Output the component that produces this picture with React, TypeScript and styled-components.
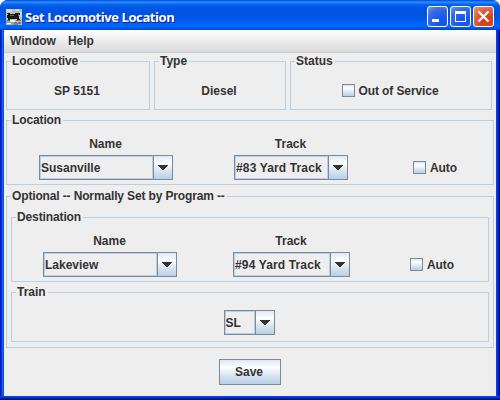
import React from 'react';
import styled, { createGlobalStyle, css } from 'styled-components';

const INK = '#333333';
const FACE = '#eeeeee';
const LINE = '#b8cfe5';
const EDGE = '#7a8a99';
const metal = 'linear-gradient(180deg, #dde8f3 0%, #ffffff 30%, #dde8f3 60%, #b8cfe5 100%)';

const GlobalStyle = createGlobalStyle`
  * { box-sizing: border-box; }
  body { margin: 0; background: #fff; overflow: hidden; }
`;

const Frame = styled.div`
  width: 500px;
  height: 400px;
  display: flex;
  flex-direction: column;
  border-radius: 8px 8px 0 0;
  overflow: hidden;
  background: linear-gradient(90deg, #0019cf 0 1px, #0831d9 1px 2px, #1660e8 2px 3px, #0855dd 3px 250px, #0540e8 250px 497px, #0030dc 497px 498px, #001ea0 498px 499px, #00138c 499px);
  font: bold 12px/16px 'Liberation Sans', Arial, sans-serif;
  color: ${INK};
`;

const TitleBar = styled.header`
  height: 30px;
  flex: none;
  display: flex;
  align-items: center;
  padding: 3px 6px 0;
  background: linear-gradient(180deg, #0058e0 0, #0a5ce8 1px, #3a93ff 2px, #1a7afa 3px, #0062ee 5px, #0055e2 8px, #0053e1 14px, #005af0 20px, #0066ff 25px, #0062f8 27px, #0050dc 29px, #0040c0 30px);
`;

const Title = styled.h1`
  flex: 1;
  margin: 0 0 0 3px;
  font: bold 13px/18px 'Open Sans', 'Noto Sans', sans-serif;
  letter-spacing: -0.42px;
  color: #fff;
  text-shadow: 1px 1px 0 #0a1883;
  white-space: nowrap;
`;

const Controls = styled.div`
  display: flex;
  gap: 2px;
`;

const ControlButton = styled.button<{ $close?: boolean }>`
  width: 21px;
  height: 21px;
  padding: 0;
  border: 1px solid #fff;
  border-radius: 3px;
  background: ${p => p.$close
    ? 'radial-gradient(circle at 75% 85%, #d8431b 0 30%, #e36343 65%, #ef9a80 100%)'
    : 'radial-gradient(circle at 75% 85%, #1557ee 0 25%, #3469e5 65%, #7697eb 100%)'};
  svg { display: block; }
`;

const Client = styled.main`
  flex: 1;
  margin: 0 4px 4px;
  background: ${FACE};
  display: flex;
  flex-direction: column;
`;

const BottomEdge = styled.div`
  height: 4px;
  flex: none;
  margin-top: -4px;
  background: linear-gradient(180deg, #0543e8 0 1px, #0036dc 1px 2px, #001ea0 2px 3px, #00138c 3px);
`;

const MenuBar = styled.nav`
  height: 23px;
  flex: none;
  display: flex;
  gap: 12px;
  padding: 3px 6px 0;
  background: linear-gradient(180deg, #ffffff, #dadada);
  border-bottom: 1px solid #cccccc;
`;

const Text = styled.span<{ $spacing?: number }>`
  white-space: nowrap;
  letter-spacing: ${p => p.$spacing ?? 0}px;
`;

const Content = styled.div`
  display: flex;
  flex-direction: column;
  padding: 8px 2px 0;
`;

const PanelRow = styled.div`
  display: flex;
  gap: 4px;
`;

const PanelBox = styled.section<{ $w: number; $h: number; $top?: number; $center?: boolean }>`
  position: relative;
  width: ${p => p.$w}px;
  height: ${p => p.$h}px;
  margin-top: ${p => p.$top ?? 0}px;
  border: 1px solid ${LINE};
  ${p => p.$center && css`
    display: flex;
    justify-content: center;
    align-items: center;
    padding: 10px 2px 0 0;
  `}
`;

const PanelTitle = styled.h2`
  position: absolute;
  left: 4px;
  top: -9px;
  margin: 0;
  padding: 0 2px 0 1px;
  font: inherit;
  background: ${FACE};
`;

const Columns = styled.div<{ $cols: string }>`
  display: grid;
  grid-template-columns: ${p => p.$cols};
  padding-top: 15px;
`;

const Field = styled.div`
  display: flex;
  flex-direction: column;
  align-items: center;
  gap: 3px;
`;

const FieldLabel = styled.span`
  padding-right: 1px;
`;

const CheckCell = styled.div<{ $left: number }>`
  padding: 24px 0 0 ${p => p.$left}px;
`;

const CheckLabel = styled.label`
  display: flex;
  align-items: center;
  gap: 4px;
`;

const CheckBox = styled.span`
  width: 13px;
  height: 13px;
  margin-bottom: 1px;
  border: 1px solid ${EDGE};
  background: ${metal};
`;

const ComboBox = styled.div<{ $w: number }>`
  width: ${p => p.$w}px;
  height: 25px;
  display: flex;
  border: 1px solid ${EDGE};
`;

const ComboValue = styled.div`
  flex: 1;
  min-width: 0;
  border: 1px solid ${LINE};
  padding: 3px 0 0;
`;

const ComboArrow = styled.div`
  width: 19px;
  border-left: 1px solid ${EDGE};
  background: ${metal};
  display: flex;
  align-items: center;
  justify-content: center;
`;

const Nested = styled.div`
  padding: 20px 4px 0;
`;

const SaveButton = styled.button`
  align-self: center;
  width: 62px;
  height: 26px;
  margin: 11px 0 0;
  padding: 0 2px 0 0;
  border: 1px solid ${EDGE};
  background: ${metal};
  font: inherit;
  color: ${INK};
`;

function TrainIcon() {
  return (
    <svg width="16" height="16" viewBox="0 0 16 16" shapeRendering="crispEdges">
      <path fill="#b9bdba" d="M0 0h16v16H0z" />
      <path fill="#d3d8d7" d="M0 0h6v3H0zM9 0h4v2H9zM14 3h2v5h-2z" />
      <path fill="#151719" d="M1 4h3v1h5V4h5v2h-1v4h1v1h-3v-1H4v1H2V9H1V6h1V5H1z" />
      <path fill="#63696c" d="M4 6h4v1H4zM12 5h1v2h-1zM1 11h4v1H1z" />
      <path fill="#8fa9a1" d="M0 12h5v2H0zM5 13h3v3H5z" />
      <path fill="#e7f2ef" d="M4 11h5v2H4zM1 14h4v1H1z" />
      <path fill="#b9605c" d="M10 11h3v1h-3zM8 13h3v1H8zM12 13h3v2h-3z" />
      <path fill="#7d8285" d="M8 14h4v2H8zM13 11h2v1h-2z" />
    </svg>
  );
}

function Panel({ title, w, h, top, center, spacing, children }: {
  title: string; w: number; h: number; top?: number; center?: boolean; spacing?: number; children: React.ReactNode;
}) {
  return (
    <PanelBox $w={w} $h={h} $top={top} $center={center}>
      <PanelTitle><Text $spacing={spacing}>{title}</Text></PanelTitle>
      {children}
    </PanelBox>
  );
}

function Combo({ w, value, spacing }: { w: number; value: string; spacing?: number }) {
  return (
    <ComboBox $w={w}>
      <ComboValue><Text $spacing={spacing}>{value}</Text></ComboValue>
      <ComboArrow>
        <svg width="10" height="5" viewBox="0 0 10 5" shapeRendering="crispEdges">
          <path fill={INK} d="M0 0h10v1H9v1H8v1H7v1H6v1H4V4H3V3H2V2H1V1H0z" />
        </svg>
      </ComboArrow>
    </ComboBox>
  );
}

function Check({ label, spacing }: { label: string; spacing?: number }) {
  return <CheckLabel><CheckBox /><Text $spacing={spacing}>{label}</Text></CheckLabel>;
}

function Place({ cols, name, track, trackWidth, checkLeft }: {
  cols: string; name: string; track: string; trackWidth: number; checkLeft: number;
}) {
  return (
    <Columns $cols={cols}>
      <Field><FieldLabel>Name</FieldLabel><Combo w={134} value={name} /></Field>
      <Field><FieldLabel>Track</FieldLabel><Combo w={trackWidth} value={track} spacing={0.14} /></Field>
      <CheckCell $left={checkLeft}><Check label="Auto" spacing={-0.1} /></CheckCell>
    </Columns>
  );
}

export default function App() {
  return (
    <>
      <GlobalStyle />
      <Frame>
        <TitleBar>
          <TrainIcon />
          <Title>Set Locomotive Location</Title>
          <Controls>
            <ControlButton aria-label="Minimize">
              <svg width="19" height="19"><path fill="#fff" d="M4 12h7v3H4z" /></svg>
            </ControlButton>
            <ControlButton aria-label="Maximize">
              <svg width="19" height="19"><path fill="#fff" fillRule="evenodd" d="M4 4h11v11H4zM5 7v7h9V7z" /></svg>
            </ControlButton>
            <ControlButton $close aria-label="Close">
              <svg width="19" height="19"><path stroke="#fff" strokeWidth="2.2" d="M4.5 4.5l10 10M14.5 4.5l-10 10" /></svg>
            </ControlButton>
          </Controls>
        </TitleBar>
        <Client>
          <MenuBar><Text>Window</Text><Text>Help</Text></MenuBar>
          <Content>
            <PanelRow>
              <Panel title="Locomotive" w={144} h={49} center spacing={-0.12}><Text>SP 5151</Text></Panel>
              <Panel title="Type" w={132} h={49} center><Text>Diesel</Text></Panel>
              <Panel title="Status" w={202} h={49} center><Check label="Out of Service" spacing={-0.1} /></Panel>
            </PanelRow>
            <Panel title="Location" w={488} h={65} top={10} spacing={-0.12}>
              <Place cols="198px 172px 1fr" name="Susanville" track="#83 Yard Track" trackWidth={114} checkLeft={36} />
            </Panel>
            <Panel title="Optional -- Normally Set by Program --" w={488} h={152} top={11} spacing={-0.14}>
              <Nested>
                <Panel title="Destination" w={478} h={65} spacing={-0.12}>
                  <Place cols="196px 167px 1fr" name="Lakeview" track="#94 Yard Track" trackWidth={117} checkLeft={35} />
                </Panel>
                <Panel title="Train" w={478} h={50} top={10} center><Combo w={51} value="SL" /></Panel>
              </Nested>
            </Panel>
            <SaveButton>Save</SaveButton>
          </Content>
        </Client>
        <BottomEdge />
      </Frame>
    </>
  );
}
